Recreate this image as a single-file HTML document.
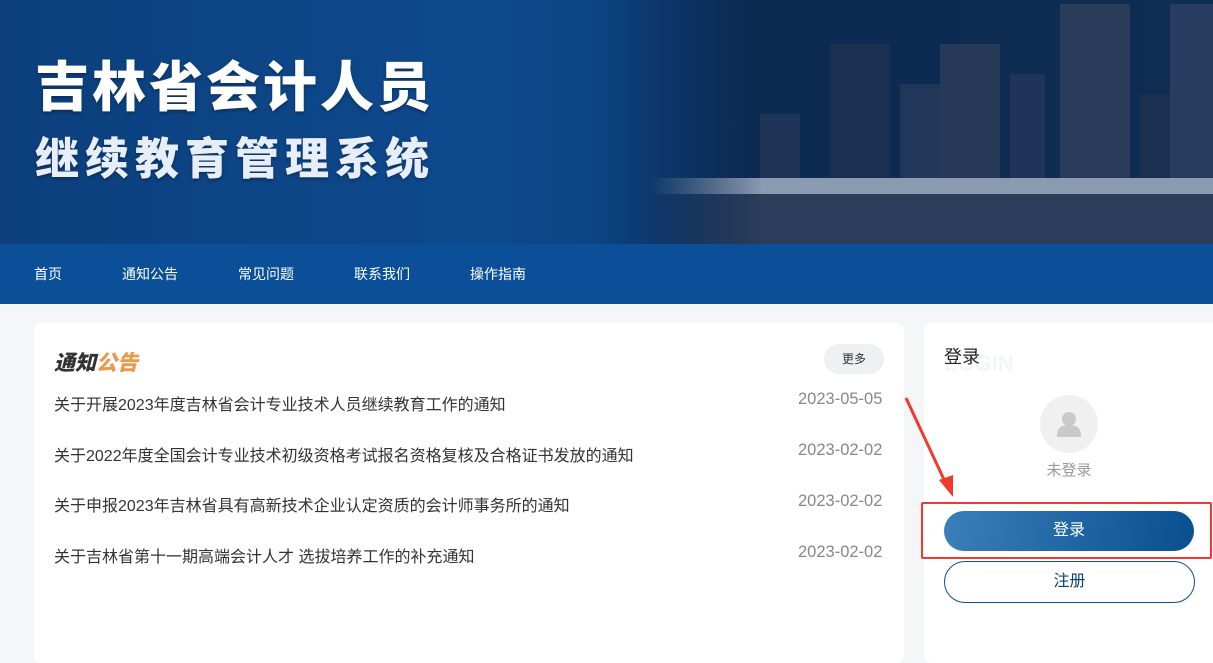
<!DOCTYPE html>
<html><head><meta charset="utf-8"><style>
*{margin:0;padding:0;box-sizing:border-box}
body{width:1213px;height:649px;overflow:hidden;background:#f5f6f8;font-family:"Liberation Sans","Noto Sans CJK SC",sans-serif;position:relative}
.banner{position:absolute;left:0;top:0;width:1213px;height:244px;background:linear-gradient(90deg,#0c3f7c 0%,#0e4a8e 40%,#0b3a72 62%,#0a2a55 80%,#0b2448 100%);overflow:hidden}
.t1,.t2{position:absolute;left:35px;color:#fff;font-family:"Noto Sans CJK SC",sans-serif;font-weight:900;text-shadow:0 2px 3px rgba(0,0,0,.3)}
.t1{top:50px;font-size:54px;letter-spacing:3px;line-height:66px}
.t2{top:128px;font-size:44px;letter-spacing:6px;line-height:54px;color:#e8eef8}
.b{position:absolute;bottom:0}
.nav{position:absolute;top:244px;left:0;width:1213px;height:60px;background:#0a4f98}
.nav span{position:absolute;top:20px;color:#fff;font-size:14px}
.card{position:absolute;background:#fff;border-radius:8px}
.item{position:absolute;left:54px;font-size:16px;color:#333}
.date{position:absolute;font-size:16.5px;color:#888;left:798px}
</style></head><body>
<div class="banner">
<div style="position:absolute;left:600px;top:0;width:613px;height:244px;background:linear-gradient(90deg,rgba(11,42,85,0),#0c2a52 25%,#0f2c52)"></div>
<div class="b" style="left:760px;width:40px;height:130px;background:#1f3558"></div>
<div class="b" style="left:830px;width:60px;height:200px;background:#1b3050"></div>
<div class="b" style="left:900px;width:40px;height:160px;background:#20375a"></div>
<div class="b" style="left:940px;width:60px;height:200px;background:#263a58"></div>
<div class="b" style="left:1010px;width:35px;height:170px;background:#1f3458"></div>
<div class="b" style="left:1060px;width:70px;height:240px;background:#293d5a"></div>
<div class="b" style="left:1140px;width:30px;height:150px;background:#1b2f50"></div>
<div class="b" style="left:1170px;width:43px;height:240px;background:#273c5e"></div>
<div style="position:absolute;left:650px;top:178px;width:563px;height:16px;background:linear-gradient(90deg,rgba(140,155,175,0),#8a9ab0 20%)"></div>
<div style="position:absolute;left:650px;top:194px;width:563px;height:50px;background:linear-gradient(90deg,rgba(40,60,90,0),#2a3d5a 20%)"></div>
<div class="t1">吉林省会计人员</div>
<div class="t2">继续教育管理系统</div>
</div>
<div class="nav"><span style="left:34px">首页</span><span style="left:122px">通知公告</span><span style="left:238px">常见问题</span><span style="left:354px">联系我们</span><span style="left:470px">操作指南</span></div>
<div class="card" style="left:34px;top:323px;width:870px;height:340px">
<div style="position:absolute;left:20px;top:24px;font-size:21px;font-weight:900;font-style:italic;color:#333;font-family:'Noto Sans CJK SC',sans-serif">通知<span style="color:#e99a4f">公告</span></div>
<div style="position:absolute;right:20px;top:21px;width:60px;height:30px;border-radius:15px;background:#eef0f3;font-size:12px;color:#333;text-align:center;line-height:30px">更多</div>
</div>
<div class="item" style="top:391px">关于开展2023年度吉林省会计专业技术人员继续教育工作的通知</div>
<div class="item" style="top:442px">关于2022年度全国会计专业技术初级资格考试报名资格复核及合格证书发放的通知</div>
<div class="item" style="top:492px">关于申报2023年吉林省具有高新技术企业认定资质的会计师事务所的通知</div>
<div class="item" style="top:543px">关于吉林省第十一期高端会计人才 选拔培养工作的补充通知</div>
<div class="date" style="top:390px">2023-05-05</div>
<div class="date" style="top:441px">2023-02-02</div>
<div class="date" style="top:492px">2023-02-02</div>
<div class="date" style="top:543px">2023-02-02</div>
<div class="card" style="left:924px;top:323px;width:300px;height:340px">
<div style="position:absolute;left:20px;top:28px;font-size:22px;font-weight:bold;color:#f3f5f8">LOGIN</div>
<div style="position:absolute;left:20px;top:20px;font-size:18px;color:#222">登录</div>
<div style="position:absolute;left:116px;top:72px;width:58px;height:58px;border-radius:50%;background:#f0f0f0">
<svg width="58" height="58" viewBox="0 0 58 58"><circle cx="29" cy="24" r="7" fill="#c9c9c9"/><path d="M17 40 q0-10 12-10 q12 0 12 10 v2 h-24z" fill="#c9c9c9"/></svg></div>
<div style="position:absolute;left:0;width:290px;top:136px;text-align:center;font-size:15px;color:#999">未登录</div>
<div style="position:absolute;left:20px;top:188px;width:250px;height:40px;border-radius:20px;background:linear-gradient(100deg,#3b7fba,#084f8f);color:#fff;text-align:center;line-height:40px;font-size:16px">登录</div>
<div style="position:absolute;left:20px;top:238px;width:251px;height:42px;border-radius:21px;border:1px solid #0a4f8f;color:#0a3f70;text-align:center;line-height:40px;font-size:16px">注册</div>
</div>
<div style="position:absolute;left:921px;top:502px;width:291px;height:57px;border:2px solid #f03a2e;border-radius:2px"></div>
<svg style="position:absolute;left:900px;top:390px" width="60" height="115"><line x1="6" y1="8" x2="47" y2="96" stroke="#f03a2e" stroke-width="3"/><path d="M39 90 L53 107 L53 85 Z" fill="#f03a2e"/></svg>
</body></html>
